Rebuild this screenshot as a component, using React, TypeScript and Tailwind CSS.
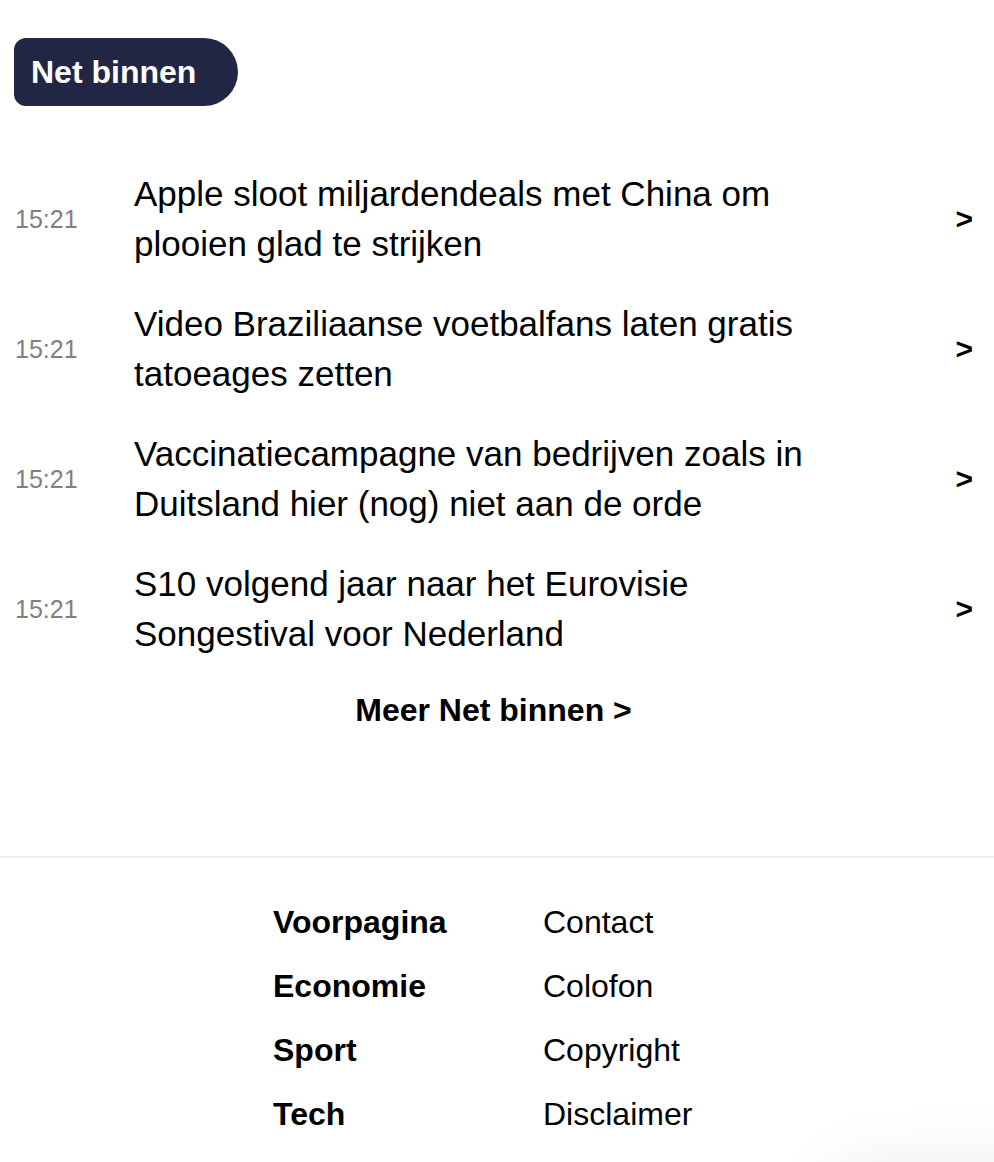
import React from 'react';

const items = [
  { time: '15:21', title: 'Apple sloot miljardendeals met China om plooien glad te strijken' },
  { time: '15:21', title: 'Video Braziliaanse voetbalfans laten gratis tatoeages zetten' },
  { time: '15:21', title: 'Vaccinatiecampagne van bedrijven zoals in Duitsland hier (nog) niet aan de orde' },
  { time: '15:21', title: 'S10 volgend jaar naar het Eurovisie Songestival voor Nederland' },
];

const sections = ['Voorpagina', 'Economie', 'Sport', 'Tech'];
const service = ['Contact', 'Colofon', 'Copyright', 'Disclaimer'];

export default function App() {
  return (
    <div className="relative min-h-[1162px] overflow-hidden bg-white text-black font-['Liberation_Sans',Arial,sans-serif]">
      <section className="pt-[38px] pl-[14px] pr-[21px]">
        <div className="inline-flex h-[68px] w-[224px] items-center rounded-l-[12px] rounded-r-[34px] bg-[#222645] pl-[17px]">
          <h2 className="text-[32px] font-bold leading-none text-white">Net binnen</h2>
        </div>

        <ul className="mt-[63px] flex flex-col gap-[30px]">
          {items.map((item, i) => (
            <li key={i} className="flex items-center">
              <span className="w-[120px] shrink-0 pl-[1px] text-[25px] leading-none text-[#808080]">{item.time}</span>
              <a href="#" className="w-[720px] text-[35px] leading-[50px]">
                {item.title}
              </a>
              <span className="ml-auto text-[30px] font-bold leading-none">&gt;</span>
            </li>
          ))}
        </ul>

        <div className="mt-[35px] text-center">
          <a href="#" className="text-[32px] font-bold leading-none">Meer Net binnen &gt;</a>
        </div>
      </section>

      <footer className="mt-[128px] border-t-2 border-[#eeeeee] pt-[46px]">
        <div className="ml-[273px] grid w-[480px] grid-cols-[270px_1fr] gap-y-[28px]">
          {sections.map((s, i) => (
            <React.Fragment key={s}>
              <a href="#" className="text-[32px] font-bold leading-[36px]">{s}</a>
              <a href="#" className="text-[32px] leading-[36px]">{service[i]}</a>
            </React.Fragment>
          ))}
        </div>
      </footer>

      <div className="pointer-events-none absolute left-[830px] top-[1168px] h-[120px] w-[320px] rounded-[40px] bg-white shadow-[0_0_70px_rgba(0,0,0,0.09)]" />
    </div>
  );
}
